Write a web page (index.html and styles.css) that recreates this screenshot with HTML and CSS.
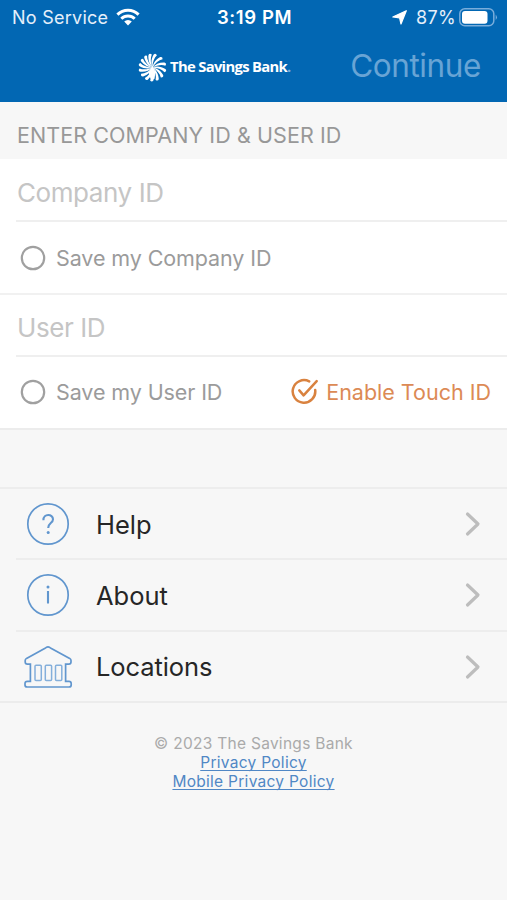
FILE: index.html
```html
<!DOCTYPE html>
<html lang="en">
<head>
<meta charset="utf-8">
<title>The Savings Bank</title>
<link rel="stylesheet" href="styles.css">
</head>
<body>
<header class="top">
  <div class="status">
    <div class="status-side">
      <span class="carrier">No Service</span>
      <svg class="wifi" width="24" height="18" viewBox="0 0 24 18"><g fill="none" stroke="#fff" stroke-width="3"><path d="M1.4 6.6a15.2 15.2 0 0 1 21.2 0"/><path d="M5.3 10.7a9.6 9.6 0 0 1 13.4 0"/></g><path fill="#fff" d="M12 17.5l-3.8-3.9a5.5 5.5 0 0 1 7.6 0z"/></svg>
    </div>
    <span class="clock">3:19 PM</span>
    <div class="status-side status-right">
      <svg class="arrow" width="15" height="15" viewBox="0 0 15 15"><path fill="#fff" d="M14.3.7L9 14 7.6 7.8.8 7z" stroke="#fff" stroke-width="1.2" stroke-linejoin="round"/></svg>
      <span class="percent">87%</span>
      <svg class="battery" width="39" height="19" viewBox="0 0 39 19"><rect x=".8" y=".8" width="34" height="17" rx="5" fill="none" stroke="#79addb" stroke-width="1.5"/><rect x="3" y="3" width="25.5" height="12.8" rx="3" fill="#fff"/><path d="M36.7 6.5q2.5 2.8 0 5.6z" fill="#79addb"/></svg>
    </div>
  </div>
  <div class="nav">
    <div class="brand">
      <svg class="burst" width="29" height="29" viewBox="-15 -15 30 30">
        <defs><path id="ray" d="M0 0C-1.8-4-1.4-9 1.2-13.4Q3.2-15.4 4.6-12.6C1.6-9.8 0-5 0 0z"/></defs>
        <g fill="#fff"><use href="#ray"/><use href="#ray" transform="rotate(31)"/><use href="#ray" transform="rotate(62)"/><use href="#ray" transform="rotate(92)"/><use href="#ray" transform="rotate(120)"/><use href="#ray" transform="rotate(146)"/><use href="#ray" transform="rotate(171)"/><use href="#ray" transform="rotate(196)"/><use href="#ray" transform="rotate(221)"/><use href="#ray" transform="rotate(246)"/><use href="#ray" transform="rotate(270)"/><use href="#ray" transform="rotate(293)"/><use href="#ray" transform="rotate(315)"/><use href="#ray" transform="rotate(337)"/><path d="M0-2L3 5 2 12-2 12-4 5z"/></g>
      </svg>
      <span class="brand-name">The Savings Bank<span class="brand-dot">.</span></span>
    </div>
    <span class="continue">Continue</span>
  </div>
</header>
<main>
  <h1 class="section-title"><span>ENTER COMPANY ID &amp; USER ID</span></h1>
  <section class="form">
    <div class="field"><span class="company">Company ID</span></div>
    <div class="option">
      <svg class="radio" width="26" height="26" viewBox="0 0 26 26"><circle cx="13" cy="13" r="11.2"/></svg>
      <span class="save-company">Save my Company ID</span>
    </div>
    <div class="field"><span class="user">User ID</span></div>
    <div class="option">
      <svg class="radio" width="26" height="26" viewBox="0 0 26 26"><circle cx="13" cy="13" r="11.2"/></svg>
      <span class="save-user">Save my User ID</span>
      <div class="touch">
        <svg class="check" width="28" height="28" viewBox="0 0 28 28"><path d="M18.2 3.4A11.3 11.3 0 1 0 24.2 12"/><path d="M8.3 12.4l4.3 5L25.7 3.2"/></svg>
        <span class="touch-label">Enable Touch ID</span>
      </div>
    </div>
  </section>
  <nav class="menu">
    <div class="item">
      <svg class="icon" width="50" height="44" viewBox="0 0 50 44"><circle cx="25" cy="22" r="20.2"/><path class="glyph" d="M20.4 18.2c0-7 9.6-6.5 9.6-1 0 4-4.8 3.8-4.8 8.7"/><circle class="dot" cx="25.2" cy="30.4" r="1.5"/></svg>
      <span class="help">Help</span>
      <svg class="chevron" width="16" height="26" viewBox="0 0 16 26"><path d="M2.5 3L13 13 2.5 23"/></svg>
    </div>
    <div class="item">
      <svg class="icon" width="50" height="44" viewBox="0 0 50 44"><circle cx="25" cy="22" r="20.2"/><path class="glyph" d="M25 18v12.5"/><circle class="dot" cx="25" cy="14" r="1.5"/></svg>
      <span class="about">About</span>
      <svg class="chevron" width="16" height="26" viewBox="0 0 16 26"><path d="M2.5 3L13 13 2.5 23"/></svg>
    </div>
    <div class="item">
      <svg class="icon" width="50" height="44" viewBox="0 0 50 44"><path d="M25 1.8Q24.2 1.8 22.5 2.9L3.5 13.4Q2.2 14.2 2.2 15.5V17q0 2.2 2.2 2.2H7.4V36.3H4.3Q2 36.3 2 38.5V40q0 2 2.2 2H46q2.2 0 2.2-2v-1.5q0-2.2-2.3-2.2H42.6V19.2h3.2q2.2 0 2.2-2.2v-1.5q0-1.3-1.3-2.1L27.5 2.9Q25.8 1.8 25 1.8z"/><g class="columns"><rect x="12" y="20.2" width="6.3" height="15.3" rx="1"/><rect x="22.3" y="20.2" width="6.3" height="15.3" rx="1"/><rect x="32.5" y="20.2" width="6.3" height="15.3" rx="1"/></g></svg>
      <span class="locations">Locations</span>
      <svg class="chevron" width="16" height="26" viewBox="0 0 16 26"><path d="M2.5 3L13 13 2.5 23"/></svg>
    </div>
  </nav>
</main>
<footer class="footer">
  <span class="copyright">© 2023 The Savings Bank</span>
  <a class="privacy">Privacy Policy</a>
  <a class="mobile">Mobile Privacy Policy</a>
</footer>
</body>
</html>
```

FILE: styles.css
```css
* { box-sizing: border-box; }
body { margin: 0; height: 900px; overflow: hidden; background: #f7f7f7; font-family: Inter, "Liberation Sans", sans-serif; white-space: nowrap; }
svg { display: block; flex: none; }
.top { height: 102px; background: #0267b3; color: #fff; }
.status { display: grid; grid-template-columns: 1fr auto 1fr; align-items: center; height: 34px; padding: 0 9px 0 12px; font-size: 18px; }
.status-side { display: flex; align-items: center; color: #e5effa; }
.status-right { justify-content: flex-end; }
.wifi { margin-left: 8px; }
.arrow { margin-right: 9px; }
.battery { margin-left: 3px; }
.carrier { letter-spacing: .25px; }
.percent { letter-spacing: .3px; }
.clock { margin-left: -1px; font-size: 18.5px; font-weight: 600; letter-spacing: .6px; }
.nav { display: flex; align-items: center; justify-content: space-between; height: 64px; padding: 0 26px 0 138px; }
.brand { display: flex; align-items: center; padding-top: 3px; }
.brand-name { margin: -3px 0 0 3px; font: 700 14.8px/22px "Open Sans", sans-serif; letter-spacing: -.68px; }
.brand-dot { color: #79addb; }
.continue { margin-top: -2px; color: #68a4d5; font-size: 31.5px; letter-spacing: -.4px; }
.section-title { display: flex; align-items: center; height: 57px; margin: 0; padding: 8px 17px 0; color: #989898; font-size: 21.5px; font-weight: 400; letter-spacing: .08px; }
.form { background: #fff; border-bottom: 2px solid #ececec; }
.field { display: flex; align-items: center; height: 63px; margin-left: 16px; padding: 6px 0 0 1px; border-bottom: 2px solid #efefef; color: #c5c5c5; font-size: 26px; letter-spacing: -.42px; }
.option { display: flex; align-items: center; height: 71px; padding: 0 16px 0 20px; color: #9b9b9b; font-size: 21.5px; letter-spacing: -.1px; }
.option + .field { height: 64px; margin-left: 0; padding: 3px 0 0 17px; border-top: 2px solid #f1f1f1; border-bottom: 0; }
.option + .field + .option { position: relative; padding-bottom: 2px; }
.option + .field + .option::before { content: ""; position: absolute; top: -2px; left: 16px; right: 0; height: 2px; background: #efefef; }
.radio { margin-right: 10px; fill: none; stroke: #a0a0a0; stroke-width: 2.2; }
.touch { display: flex; align-items: center; margin-left: auto; color: #dc8a55; letter-spacing: 0; }
.check { margin-right: 7px; fill: none; stroke: #d9823f; stroke-width: 2.5; stroke-linecap: round; stroke-linejoin: round; }
.menu { margin-top: 57px; border-top: 2px solid #ededed; border-bottom: 2px solid #ececec; }
.item { display: flex; align-items: center; height: 69px; margin-left: 16px; padding: 0 26px 0 7px; color: #262626; font-size: 25.5px; }
.item + .item { height: 72px; border-top: 2px solid #ededed; }
.item:last-child { height: 71px; }
.icon { margin-right: 23px; fill: none; stroke: #6196ce; stroke-width: 1.7; }
.icon .glyph { stroke-width: 2.1; }
.icon .dot { fill: #6196ce; stroke: none; }
.icon .columns { stroke: #84afdb; stroke-width: 1.5; }
.help { padding-top: 1px; }
.locations { letter-spacing: -.1px; }
.chevron { margin-left: auto; fill: none; stroke: #bdbdbd; stroke-width: 3.2; stroke-linecap: round; stroke-linejoin: round; }
.footer { display: flex; flex-direction: column; align-items: center; margin-top: 31px; font-size: 15.5px; line-height: 19px; letter-spacing: .28px; color: #aaa; }
.footer a { color: #5087c5; text-decoration: underline; text-underline-offset: 2px; text-decoration-skip-ink: none; }
```
